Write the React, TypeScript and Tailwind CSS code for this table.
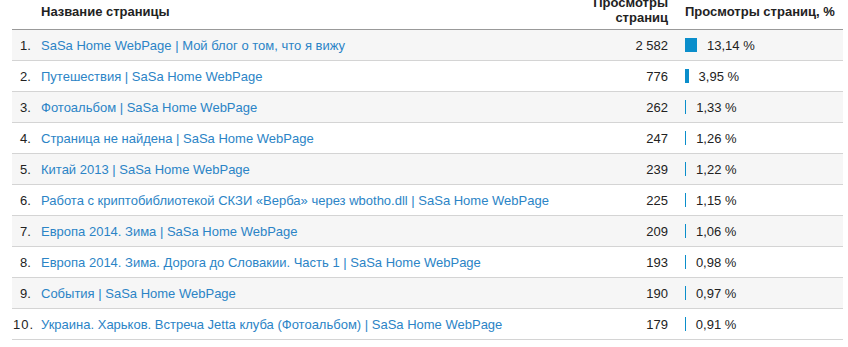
import React from 'react';

interface PageRow {
  title: string;
  views: string;
  pct: number;
}

const rows: PageRow[] = [
  { title: 'SaSa Home WebPage | Мой блог о том, что я вижу', views: '2 582', pct: 13.14 },
  { title: 'Путешествия | SaSa Home WebPage', views: '776', pct: 3.95 },
  { title: 'Фотоальбом | SaSa Home WebPage', views: '262', pct: 1.33 },
  { title: 'Страница не найдена | SaSa Home WebPage', views: '247', pct: 1.26 },
  { title: 'Китай 2013 | SaSa Home WebPage', views: '239', pct: 1.22 },
  { title: 'Работа с криптобиблиотекой СКЗИ «Верба» через wbotho.dll | SaSa Home WebPage', views: '225', pct: 1.15 },
  { title: 'Европа 2014. Зима | SaSa Home WebPage', views: '209', pct: 1.06 },
  { title: 'Европа 2014. Зима. Дорога до Словакии. Часть 1 | SaSa Home WebPage', views: '193', pct: 0.98 },
  { title: 'События | SaSa Home WebPage', views: '190', pct: 0.97 },
  { title: 'Украина. Харьков. Встреча Jetta клуба (Фотоальбом) | SaSa Home WebPage', views: '179', pct: 0.91 },
];

const maxPct = 13.14;

const fmt = (n: number) => n.toFixed(2).replace('.', ',') + ' %';

const App: React.FC = () => {
  return (
    <div className="bg-white w-[848px] h-[347px] overflow-hidden font-['Arial','Liberation_Sans',sans-serif] text-[13px] leading-[15px] text-[#222]">
      <div className="ml-3 w-[831px]">
        <div className="flex h-[30px] border-b border-[#999] font-bold">
          <div className="flex-1 pl-[29px] pt-[4px]">Название страницы</div>
          <div className="w-[100px] text-right mt-[-5px]">
            Просмотры
            <br />
            страниц
          </div>
          <div className="w-[175px] pl-[17px] pt-[4px]">Просмотры страниц, %</div>
        </div>
        {rows.map((row, i) => (
          <div
            key={i}
            className={`flex h-[31px] items-center border-b border-[#d4d4d4] ${i % 2 === 0 ? 'bg-[#f6f6f6]' : 'bg-white'}`}
          >
            <div className="flex-1 flex items-center min-w-0">
              <span className={`w-[29px] shrink-0 ${i < 9 ? 'pl-[8px]' : 'pl-[1px] tracking-[1px]'}`}>{i + 1}.</span>
              <span className="text-[#2b84c6] whitespace-nowrap">{row.title}</span>
            </div>
            <div className="w-[100px] text-right">{row.views}</div>
            <div className="w-[175px] pl-[17px] flex items-center">
              <span
                className="h-[14px] bg-[#0a8ecb] inline-block"
                style={{ width: `${(row.pct / maxPct) * 12}px` }}
              />
              <span className="ml-[10px]">{fmt(row.pct)}</span>
            </div>
          </div>
        ))}
      </div>
    </div>
  );
};

export default App;
